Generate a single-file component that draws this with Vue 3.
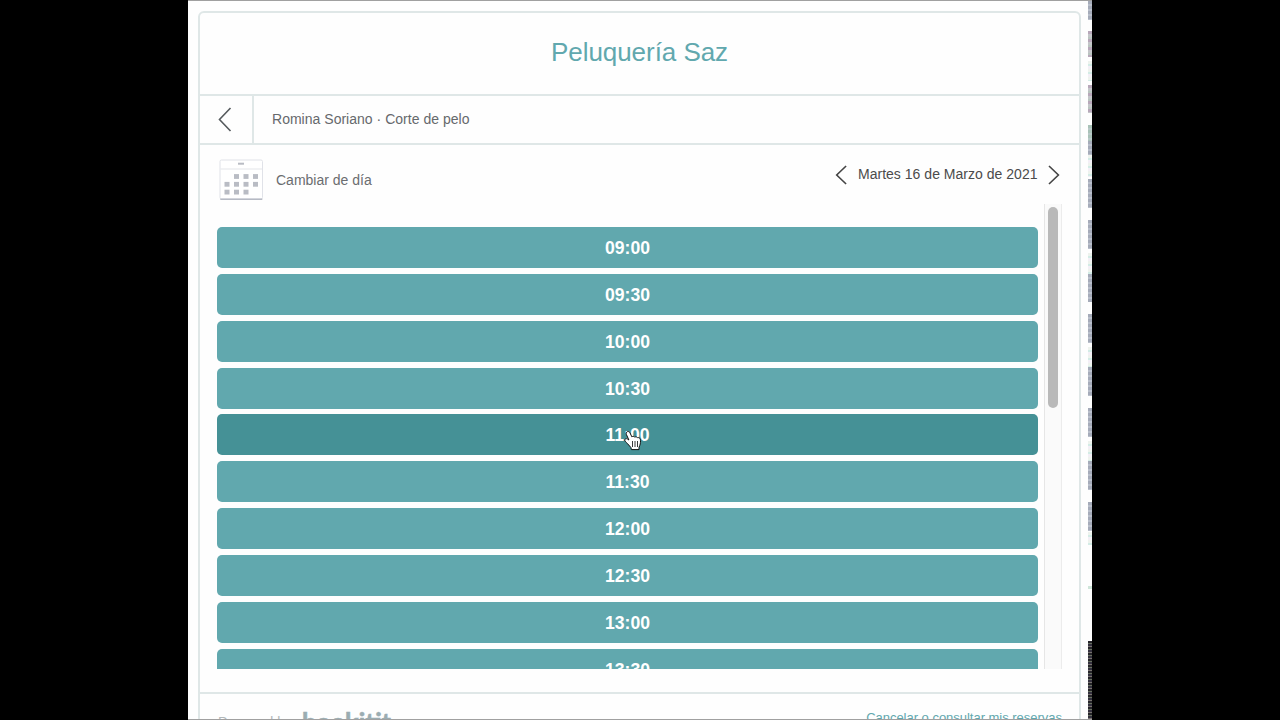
<script setup>
import { ref } from 'vue'

const business = ref('Peluquería Saz')
const selection = ref('Romina Soriano · Corte de pelo')
const currentDay = ref('Martes 16 de Marzo de 2021')
const hovered = ref('11:00')

const slots = [
  '09:00',
  '09:30',
  '10:00',
  '10:30',
  '11:00',
  '11:30',
  '12:00',
  '12:30',
  '13:00',
  '13:30'
]

// day squares of the calendar icon
const days = [
  [14.5, 14.6],
  [24, 14.6],
  [33.5, 14.6],
  [5, 22.4],
  [14.5, 22.4],
  [24, 22.4],
  [33.5, 22.4],
  [5, 30.2],
  [14.5, 30.2],
  [24, 30.2]
]

// what shows of the window behind, from top to bottom
const strip = [
  { h: 19, kind: 'solid' },
  { h: 11, kind: 'none' },
  { h: 26, kind: 'pink' },
  { h: 4, kind: 'none' },
  { h: 20, kind: 'light' },
  { h: 4, kind: 'none' },
  { h: 28, kind: 'pink' },
  { h: 12, kind: 'none' },
  { h: 16, kind: 'green' },
  { h: 14, kind: 'solid' },
  { h: 22, kind: 'light' },
  { h: 2, kind: 'none' },
  { h: 29, kind: 'solid' },
  { h: 12, kind: 'none' },
  { h: 29, kind: 'solid' },
  { h: 4, kind: 'none' },
  { h: 21, kind: 'light' },
  { h: 28, kind: 'solid' },
  { h: 12, kind: 'none' },
  { h: 29, kind: 'solid' },
  { h: 4, kind: 'none' },
  { h: 20, kind: 'light' },
  { h: 29, kind: 'solid' },
  { h: 12, kind: 'none' },
  { h: 29, kind: 'solid' },
  { h: 4, kind: 'none' },
  { h: 20, kind: 'light' },
  { h: 29, kind: 'solid' },
  { h: 12, kind: 'none' },
  { h: 29, kind: 'solid' },
  { h: 1, kind: 'none' },
  { h: 13, kind: 'light' },
  { h: 41, kind: 'none' },
  { h: 3, kind: 'mint' },
  { h: 52, kind: 'none' },
  { h: 79, kind: 'dark' }
]
</script>

<template>
  <div class="screen">
    <div class="page">
      <main class="widget">
        <header class="header">
          <h1 class="title">{{ business }}</h1>
        </header>

        <div class="crumbs">
          <button type="button" class="back">
            <svg width="14" height="26" viewBox="0 0 14 26">
              <path d="M12.5 1 1.5 12.5l11 11.5" />
            </svg>
          </button>
          <span class="selection">{{ selection }}</span>
        </div>

        <div class="toolbar">
          <button type="button" class="change-day">
            <svg class="calendar" width="44" height="42" viewBox="-0.5 -0.5 44 42">
              <rect class="sheet" x="0.5" y="0.5" width="42.5" height="39" rx="1.5" />
              <path class="line" d="M1 9.5h41.5" />
              <path class="base" d="M0.8 39.7h42" />
              <rect class="mark" x="18.5" y="3.2" width="6" height="2" />
              <rect
                v-for="(d, i) in days"
                :key="i"
                class="day"
                :x="d[0]"
                :y="d[1]"
                width="5"
                height="4.8"
              />
            </svg>
            <span>Cambiar de día</span>
          </button>
          <div class="day-nav">
            <svg width="12" height="20" viewBox="0 0 12 20">
              <path d="M11.1 1 1.7 10l9.4 9" />
            </svg>
            <span class="day-label">{{ currentDay }}</span>
            <svg width="12" height="20" viewBox="0 0 12 20">
              <path d="M1 1l9.4 9L1 19" />
            </svg>
          </div>
        </div>

        <div class="list">
          <div class="slots">
            <button
              v-for="slot in slots"
              :key="slot"
              type="button"
              :class="['slot', { 'slot-hover': slot === hovered }]"
            >
              {{ slot }}
            </button>
          </div>
          <div class="track">
            <div class="thumb"></div>
          </div>
        </div>

        <footer class="footer">
          <div class="powered">
            <span>Powered by</span>
            <span class="brand">bookitit</span>
          </div>
          <a class="cancel">Cancelar o consultar mis reservas</a>
        </footer>
      </main>

      <div class="strip">
        <div
          v-for="(s, i) in strip"
          :key="i"
          :class="['bit', 'bit-' + s.kind]"
          :style="{ height: s.h + 'px' }"
        ></div>
      </div>
    </div>

    <!-- pointer -->
    <svg class="cursor" width="19" height="22" viewBox="0 0 19 22">
      <path
        class="hand"
        d="M2.6 2.2c.9-1.1 2.700-.8 3.300.5l2 4.200c.8-.8 2.200-.7 2.800.3.800-.7 2.200-.5 2.800.5 1-.4 2.500.2 2.800 1.400.4 2.200.2 4.400-.5 6.300l-.8 2v2.200H7.400l-.5-2.100c-1.300-1.400-2.400-2.800-3.700-4.200C2.200 12.300 1 11.500.8 10.300c-.2-1.400 1.400-2.100 2.600-1.300l1.500 1L2.400 4.500C2 3.600 2.100 2.800 2.600 2.200z"
      />
      <path class="fingers" d="M8.500 11v6M11 11v6M13.500 11v6" />
    </svg>
  </div>
</template>

<style>
body {
  margin: 0;
  background: #000;
}
</style>

<style scoped>
.screen {
  position: relative;
  width: 1280px;
  height: 720px;
  overflow: hidden;
  background: #000;
  display: flex;
  justify-content: center;
  font-family: 'Liberation Sans', Arial, sans-serif;
}
.page {
  box-sizing: border-box;
  width: 904px;
  height: 720px;
  background: #fefefe;
  border-top: 1px solid #a0a0a0;
  border-bottom: 1px solid #a0a0a0;
  display: flex;
  justify-content: space-between;
  overflow: hidden;
}
button {
  font: inherit;
  border: 0;
  padding: 0;
  background: none;
}
.widget {
  box-sizing: border-box;
  width: 883px;
  height: 780px;
  margin: 10px 0 0 10px;
  border: 2px solid #dfe7e7;
  border-radius: 6px;
  flex: none;
}
.header {
  box-sizing: border-box;
  height: 83px;
  padding-bottom: 3px;
  border-bottom: 2px solid #dfe7e7;
  display: flex;
  justify-content: center;
  align-items: center;
}
.title {
  margin: 0;
  font-size: 26px;
  font-weight: 400;
  line-height: 30px;
  letter-spacing: -0.05px;
  color: #61a8ae;
}
.crumbs {
  height: 47px;
  border-bottom: 2px solid #dfe7e7;
  display: flex;
  align-items: center;
}
.back {
  box-sizing: border-box;
  width: 54px;
  height: 47px;
  padding-right: 2px;
  border-right: 2px solid #dfe7e7;
  display: flex;
  justify-content: center;
  align-items: center;
}
.back svg,
.day-nav svg {
  fill: none;
  stroke: #555a5d;
  stroke-width: 1.6;
}
.selection {
  margin-left: 18px;
  padding-bottom: 1px;
  font-size: 14px;
  letter-spacing: 0.02px;
  color: #66696c;
}
.toolbar {
  height: 59px;
  padding: 0 19px;
  display: flex;
  justify-content: space-between;
}
.change-day {
  display: flex;
  align-items: center;
  gap: 13px;
  height: 42px;
  margin-top: 14px;
  font-size: 14px;
  color: #6b6d70;
}
.sheet {
  fill: #fff;
  stroke: #e0e2e8;
}
.line {
  stroke: #e3e5e9;
}
.base {
  stroke: #b6bac4;
  stroke-width: 1.5;
}
.mark,
.day {
  fill: #b9bcc4;
}
.day-nav {
  display: flex;
  align-items: center;
  gap: 10.5px;
  height: 20px;
  margin-top: 20px;
  font-size: 14px;
  color: #4b4b4b;
}
.day-label {
  padding-bottom: 2px;
  letter-spacing: 0.02px;
}
.day-nav svg {
  stroke: #444;
}
.list {
  height: 465px;
  margin: 0 17px;
  display: flex;
  justify-content: space-between;
  overflow: hidden;
}
.slots {
  width: 821px;
  padding-top: 23px;
  display: flex;
  flex-direction: column;
  gap: 5.86px;
}
.slot {
  flex: none;
  height: 41px;
  border-radius: 5px;
  background: #61a8ae;
  color: #fff;
  font-size: 17.6px;
  font-weight: 700;
  line-height: 42px;
  text-align: center;
}
.slot-hover {
  background: #459196;
}
.track {
  box-sizing: border-box;
  width: 18px;
  height: 465px;
  padding: 3px 3px 0;
  background: #fafafa;
  border-left: 1px solid #e6e6e6;
  border-right: 1px solid #ececec;
}
.thumb {
  width: 10px;
  height: 201px;
  border-radius: 5px;
  background: #b9b9b9;
}
.footer {
  margin-top: 23px;
  padding: 16px 17px 0 18px;
  border-top: 2px solid #dfe7e7;
  display: flex;
  justify-content: space-between;
  align-items: flex-start;
}
.powered {
  display: flex;
  align-items: flex-start;
  gap: 10px;
  font-size: 14px;
  line-height: 18px;
  padding-top: 3px;
  color: #b2b8ba;
}
.brand {
  margin-top: -4px;
  font-family: Lato, sans-serif;
  font-size: 25px;
  font-weight: 900;
  line-height: 24px;
  color: #9badb2;
  -webkit-text-stroke: 0.4px #9badb2;
}
.cancel {
  margin-top: -0.5px;
  font-size: 13px;
  letter-spacing: -0.02px;
  line-height: 16px;
  color: #61a8ae;
}
.strip {
  width: 4px;
  flex: none;
}
.bit-solid {
  background: repeating-linear-gradient(#a5abb9 0 3px, #b9bfcb 3px 5px);
}
.bit-pink {
  background: repeating-linear-gradient(#b8a8ba 0 3px, #c4c5c9 3px 6px, #b9c5bf 6px 8px);
}
.bit-green {
  background: repeating-linear-gradient(#a9c2b8 0 3px, #b9c8c8 3px 5px);
}
.bit-light {
  background: repeating-linear-gradient(#eef3ee 0 3px, #d3ece6 3px 5px, #f3eff6 5px 8px);
}
.bit-mint {
  background: #cfe6da;
}
.bit-dark {
  background: repeating-linear-gradient(#25242a 0 2px, #67705f 2px 3px, #34313f 3px 5px, #77716e 5px 6px);
}
/* lies over the hovered slot */
.cursor {
  position: absolute;
  left: 624px;
  top: 430px;
}
.hand {
  fill: #fff;
  stroke: #111;
  stroke-width: 1;
}
.fingers {
  fill: none;
  stroke: #222;
  stroke-width: 0.9;
}
</style>
